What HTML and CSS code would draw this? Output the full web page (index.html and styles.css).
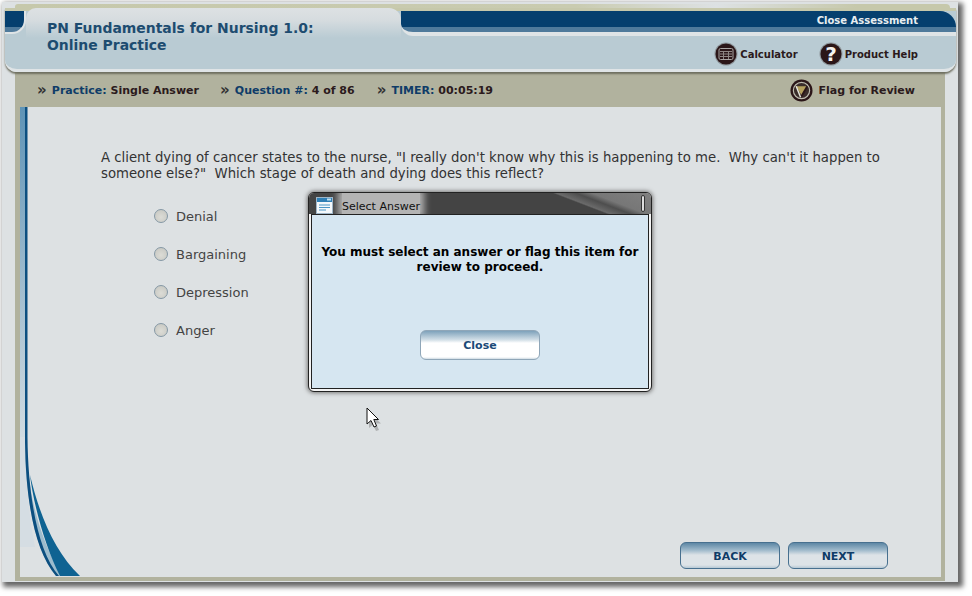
FILE: index.html
```html
<!DOCTYPE html>
<html lang="en">
<head>
    <meta charset="UTF-8">
    <title>PN Fundamentals for Nursing 1.0: Online Practice</title>
    <link rel="stylesheet" href="styles.css">
</head>
<body>
    <div class="window">
        <div class="top-strip"></div>

        <!-- Masthead -->
        <header class="masthead">
            <div class="band-left"></div>
            <h1 class="title-tab">PN Fundamentals for Nursing 1.0:<br>Online Practice</h1>
            <div class="masthead-right">
                <div class="band-right"><a href="#" class="close-link">Close Assessment</a></div>
                <div class="tools">
                    <a href="#" class="tool">
                        <svg class="tool-icon" viewBox="0 0 24 24">
                            <circle cx="12" cy="12" r="11.5" fill="#8f979c"/>
                            <circle cx="12" cy="12" r="10.5" fill="#2b1618"/>
                            <rect x="5" y="6.5" width="14" height="11" rx="1.5" fill="none" stroke="#a9a5a3" stroke-width="1"/>
                            <path d="M6 9.5h12M6 12h12M6 14.5h12M9.5 10v7M14.5 10v7" stroke="#8d8583" stroke-width="1"/>
                        </svg>
                        Calculator
                    </a>
                    <a href="#" class="tool">
                        <svg class="tool-icon" viewBox="0 0 24 24">
                            <circle cx="12" cy="12" r="11.5" fill="#8f979c"/>
                            <circle cx="12" cy="12" r="10.5" fill="#2b1618"/>
                            <text x="12" y="19" class="help-mark">?</text>
                        </svg>
                        Product Help
                    </a>
                </div>
            </div>
        </header>

        <div class="main">
            <!-- Status bar -->
            <div class="status-bar">
                <span class="status-item"><span class="chev">»</span><b>Practice:</b> Single Answer</span>
                <span class="status-item"><span class="chev">»</span><b>Question #:</b> 4 of 86</span>
                <span class="status-item"><span class="chev">»</span><b>TIMER:</b> 00:05:19</span>
                <a href="#" class="flag-link">
                    <svg class="flag-icon" viewBox="0 0 24 24">
                        <circle cx="12" cy="12" r="11.5" fill="#2b1618"/>
                        <circle cx="12" cy="12" r="8.5" fill="#3a2c2a" stroke="#bdbaae" stroke-width="1.2"/>
                        <path d="M6.5 7.5H18L12 17z" fill="#b5a05e"/>
                        <path d="M6.5 7.5L11 19" stroke="#e8e6dc" stroke-width="1.5"/>
                        <path d="M18 7.5L12 18" stroke="#2b1618" stroke-width="2"/>
                    </svg>
                    Flag for Review
                </a>
            </div>

            <!-- Question -->
            <div class="content">
                <svg class="swoosh" viewBox="0 0 62 470" width="62" height="470">
                    <defs>
                        <linearGradient id="barFade" x1="0" y1="0" x2="0" y2="1">
                            <stop offset="0" stop-color="#5e93b6"/>
                            <stop offset="0.6" stop-color="#a9c2d2"/>
                            <stop offset="1" stop-color="#d3dde3"/>
                        </linearGradient>
                    </defs>
                    <rect x="0" y="0" width="5" height="340" fill="url(#barFade)"/>
                    <path d="M0 330H6C6 380 9 410 15 440H0z" fill="#d5dde3"/>
                    <path d="M5 345C7 400 16 445 36 469H42C24 440 12 400 9 370z" fill="#9dbccd"/>
                    <path d="M5 0H7.5V330C8 390 18 445 39 469H36C16 445 6 400 5 335z" fill="#0c4f80"/>
                    <path d="M10 368C13 395 25 440 40 469H60C35 445 20 410 10 368z" fill="#0f6392"/>
                </svg>
                <p class="question">A client dying of cancer states to the nurse, "I really don't know why this is happening to me.&nbsp; Why can't it happen to someone else?"&nbsp; Which stage of death and dying does this reflect?</p>
                <ul class="options">
                    <li class="option"><span class="radio"></span>Denial</li>
                    <li class="option"><span class="radio"></span>Bargaining</li>
                    <li class="option"><span class="radio"></span>Depression</li>
                    <li class="option"><span class="radio"></span>Anger</li>
                </ul>
                <div class="nav-buttons">
                    <button class="nav-btn">BACK</button>
                    <button class="nav-btn">NEXT</button>
                </div>
            </div>
        </div>
    </div>

    <!-- Select answer dialog -->
    <div class="dialog">
        <div class="dialog-title">
            <svg class="dialog-icon" viewBox="0 0 17 17">
                <rect x="0.5" y="0.5" width="16" height="16" fill="#f4f8fb" stroke="#9fb6c8"/>
                <rect x="1" y="1" width="15" height="4" fill="#2f7fb5"/>
                <rect x="11" y="1.5" width="4" height="2" fill="#bfe0f2"/>
                <path d="M3 8h11M3 10.5h11M3 13h7" stroke="#4a96c6" stroke-width="1.2"/>
            </svg>
            <span class="dialog-caption">Select Answer</span>
            <span class="dialog-grip"></span>
        </div>
        <div class="dialog-body">
            <p class="dialog-msg">You must select an answer or flag this item for review to proceed.</p>
            <button class="close-btn">Close</button>
        </div>
    </div>

    <!-- Mouse pointer -->
    <svg class="pointer" viewBox="0 0 20 26" width="20" height="26">
        <path d="M3 5L3 21L7 17.5L10 24L13 23L10 16.5L15 16.5z" fill="#777" opacity="0.45"/>
        <path d="M1 1V17L5 13.5L8 20L10.5 19L7.8 12.5H12.5z" fill="#fff" stroke="#111" stroke-width="1"/>
    </svg>
</body>
</html>
```

FILE: styles.css
```css
/* Global styles */
html {
    height: 100%;
}

body {
    box-sizing: border-box;
    height: 100%;
    margin: 0;
    padding: 2px 0 0 2px;
    background-color: #fff;
    font-family: 'DejaVu Sans', Verdana, sans-serif;
    color: #2b1a1c;
}

a {
    color: inherit;
    text-decoration: none;
}

.window {
    display: flex;
    flex-direction: column;
    width: 956px;
    height: 580px;
    background-color: #dde1e3;
    box-shadow: 3px 3px 5px 2px #666;
}

.top-strip {
    height: 4px;
    margin: 2px 8px 0 13px;
    border-radius: 10px 14px 0 0;
    background: linear-gradient(90deg, #c6c8ab, #c9cbb0 60%, #dde1e3 75%, #c6c8ab 90%);
}

/* Masthead */
.masthead {
    position: relative;
    z-index: 2;
    display: flex;
    flex: none;
    height: 64px;
    margin: 0 2px 0 3px;
    border-radius: 0 0 12px 12px;
    border-bottom: 3px solid #dfe4e6;
    box-sizing: border-box;
    background: linear-gradient(#c6c8ab 3px, #b9cbd3 3px);
    box-shadow: 0 2px 2px #6e6f60;
}

.band-left {
    flex: none;
    width: 19px;
    height: 21px;
    margin-top: 3px;
    border-bottom: 2px solid #dfe4e6;
    border-right: 2px solid #dfe4e6;
    border-radius: 0 0 14px 0;
    background: linear-gradient(#053f6e 16px, #4f7a9b 16px);
}

.title-tab {
    flex: none;
    width: 354px;
    margin: 0;
    padding: 12px 0 0 21px;
    border-radius: 10px 12px 0 0;
    background: linear-gradient(#dde1e3, #d6dcdf 12px, #b9cbd3 30px);
    color: #1d4c70;
    font-size: 13.95px;
    line-height: 17px;
    font-weight: bold;
}

.masthead-right {
    display: flex;
    flex: 1;
    flex-direction: column;
}

.band-right {
    height: 21px;
    margin-top: 3px;
    padding-right: 38px;
    border-radius: 0 16px 0 12px;
    border-bottom: 4px solid #dfe4e6;
    background: linear-gradient(#053f6e 16px, #4f7a9b 16px);
    text-align: right;
}

.close-link {
    display: block;
    color: #e9eef1;
    font-size: 10px;
    font-weight: bold;
    line-height: 20px;
}

.tools {
    display: flex;
    justify-content: flex-end;
    align-items: center;
    gap: 21px;
    padding: 6px 38px 0 0;
}

.tool {
    display: flex;
    align-items: center;
    gap: 2px;
    font-size: 10px;
    font-weight: bold;
}

.tool-icon {
    width: 24px;
    height: 24px;
}

.help-mark {
    fill: #f4f1ee;
    font-family: 'DejaVu Sans', sans-serif;
    font-size: 20px;
    font-weight: bold;
    text-anchor: middle;
}

/* Main area */
.main {
    display: flex;
    flex: 1;
    flex-direction: column;
    min-height: 0;
    margin: 0 13px 1px 13px;
    padding: 0 4px 4px 5px;
    background-color: #b1b29e;
}

.status-bar {
    display: flex;
    align-items: center;
    flex: none;
    box-sizing: border-box;
    height: 35px;
    padding: 2px 26px 0 17px;
    font-size: 11px;
    font-weight: bold;
}

.status-item {
    display: flex;
    align-items: center;
    gap: 0.35em;
    margin-right: 22px;
}

.status-item:first-child {
    margin-right: 21px;
}

.status-item b {
    margin-right: -0.35em;
    color: #0f3c68;
}

.status-item b::after {
    content: "\00a0";
}

.chev {
    width: 11px;
    color: #333;
    font-size: 15px;
    line-height: 11px;
}

.flag-link {
    display: flex;
    align-items: center;
    gap: 5px;
    margin-left: auto;
}

.flag-icon {
    width: 23px;
    height: 23px;
}

/* Question area */
.content {
    position: relative;
    display: flex;
    flex: 1;
    flex-direction: column;
    min-height: 0;
    padding: 43px 53px 8px 81px;
    background-color: #dde1e3;
}

.swoosh {
    position: absolute;
    left: 0;
    top: 0;
}

.question {
    width: 790px;
    margin: 0;
    font-size: 13.28px;
    line-height: 16px;
    color: #333;
}

.options {
    margin: 15px 0 0;
    padding: 0 0 0 53px;
    list-style: none;
}

.option {
    display: flex;
    align-items: center;
    height: 38px;
    font-size: 13px;
    color: #444;
}

.radio {
    box-sizing: border-box;
    width: 14px;
    height: 14px;
    margin-right: 8px;
    border: 1.5px solid #8598a5;
    border-radius: 50%;
    background: radial-gradient(circle at 50% 60%, #dcdcd6, #c4c5c0);
}

.nav-buttons {
    display: flex;
    justify-content: flex-end;
    gap: 8px;
    margin-top: auto;
}

.nav-btn {
    width: 100px;
    height: 27px;
    padding: 2px 0 0;
    border: 1px solid #47708f;
    border-radius: 6px;
    background: linear-gradient(#5d87a5, #9db8ca 7px, #dde3e7 12px, #dde3e7 22px, #b6c8d4);
    color: #0f3c68;
    font-family: inherit;
    font-size: 11px;
    font-weight: bold;
}

/* Dialog */
.dialog {
    position: absolute;
    left: 308px;
    top: 192px;
    z-index: 5;
    box-sizing: border-box;
    width: 344px;
    height: 200px;
    padding: 0 2px 2px;
    border: 1px solid #222;
    border-radius: 6px;
    background-color: #f4f4f4;
    box-shadow: 0 0 4px 1px #777;
}

.dialog-title {
    position: relative;
    display: flex;
    align-items: stretch;
    height: 21px;
    margin: 0 -2px;
    padding-left: 7px;
    overflow: hidden;
    border-radius: 5px 5px 0 0;
    background: linear-gradient(21deg, #444 75%, #6a6a6a 76%, #4e4e4e 81%, #777 85%, #808080 100%);
}

.dialog-icon {
    position: relative;
    z-index: 1;
    width: 17px;
    height: 17px;
    margin-top: 4px;
}

.dialog-caption {
    margin-left: 9px;
    padding-top: 7px;
    background-color: #b4b4b4;
    box-shadow: 0 0 7px 4px #b4b4b4;
    color: #111;
    font-size: 11px;
    line-height: 14px;
}

.dialog-grip {
    position: absolute;
    right: 6px;
    top: 2px;
    width: 2px;
    height: 15px;
    border: 1px solid #333;
    border-radius: 2px;
    background-color: #ddd;
}

.dialog-body {
    display: flex;
    flex-direction: column;
    align-items: center;
    box-sizing: border-box;
    height: 175px;
    border: 1px solid #222;
    background-color: #d6e6f1;
}

.dialog-msg {
    margin: 30px 0 0;
    padding: 0 8px;
    color: #000;
    font-size: 12px;
    line-height: 15px;
    font-weight: bold;
    text-align: center;
}

.close-btn {
    width: 120px;
    height: 30px;
    margin-top: 55px;
    padding: 0;
    border: 1px solid #8fa6b8;
    border-radius: 6px;
    background: linear-gradient(#7ea2bb, #d4e0e8 9px, #fff 12px, #fff 26px, #cfdbe3);
    color: #1b4a78;
    font-family: inherit;
    font-size: 11px;
    font-weight: bold;
}

.pointer {
    position: absolute;
    left: 366px;
    top: 407px;
    z-index: 6;
}
```
